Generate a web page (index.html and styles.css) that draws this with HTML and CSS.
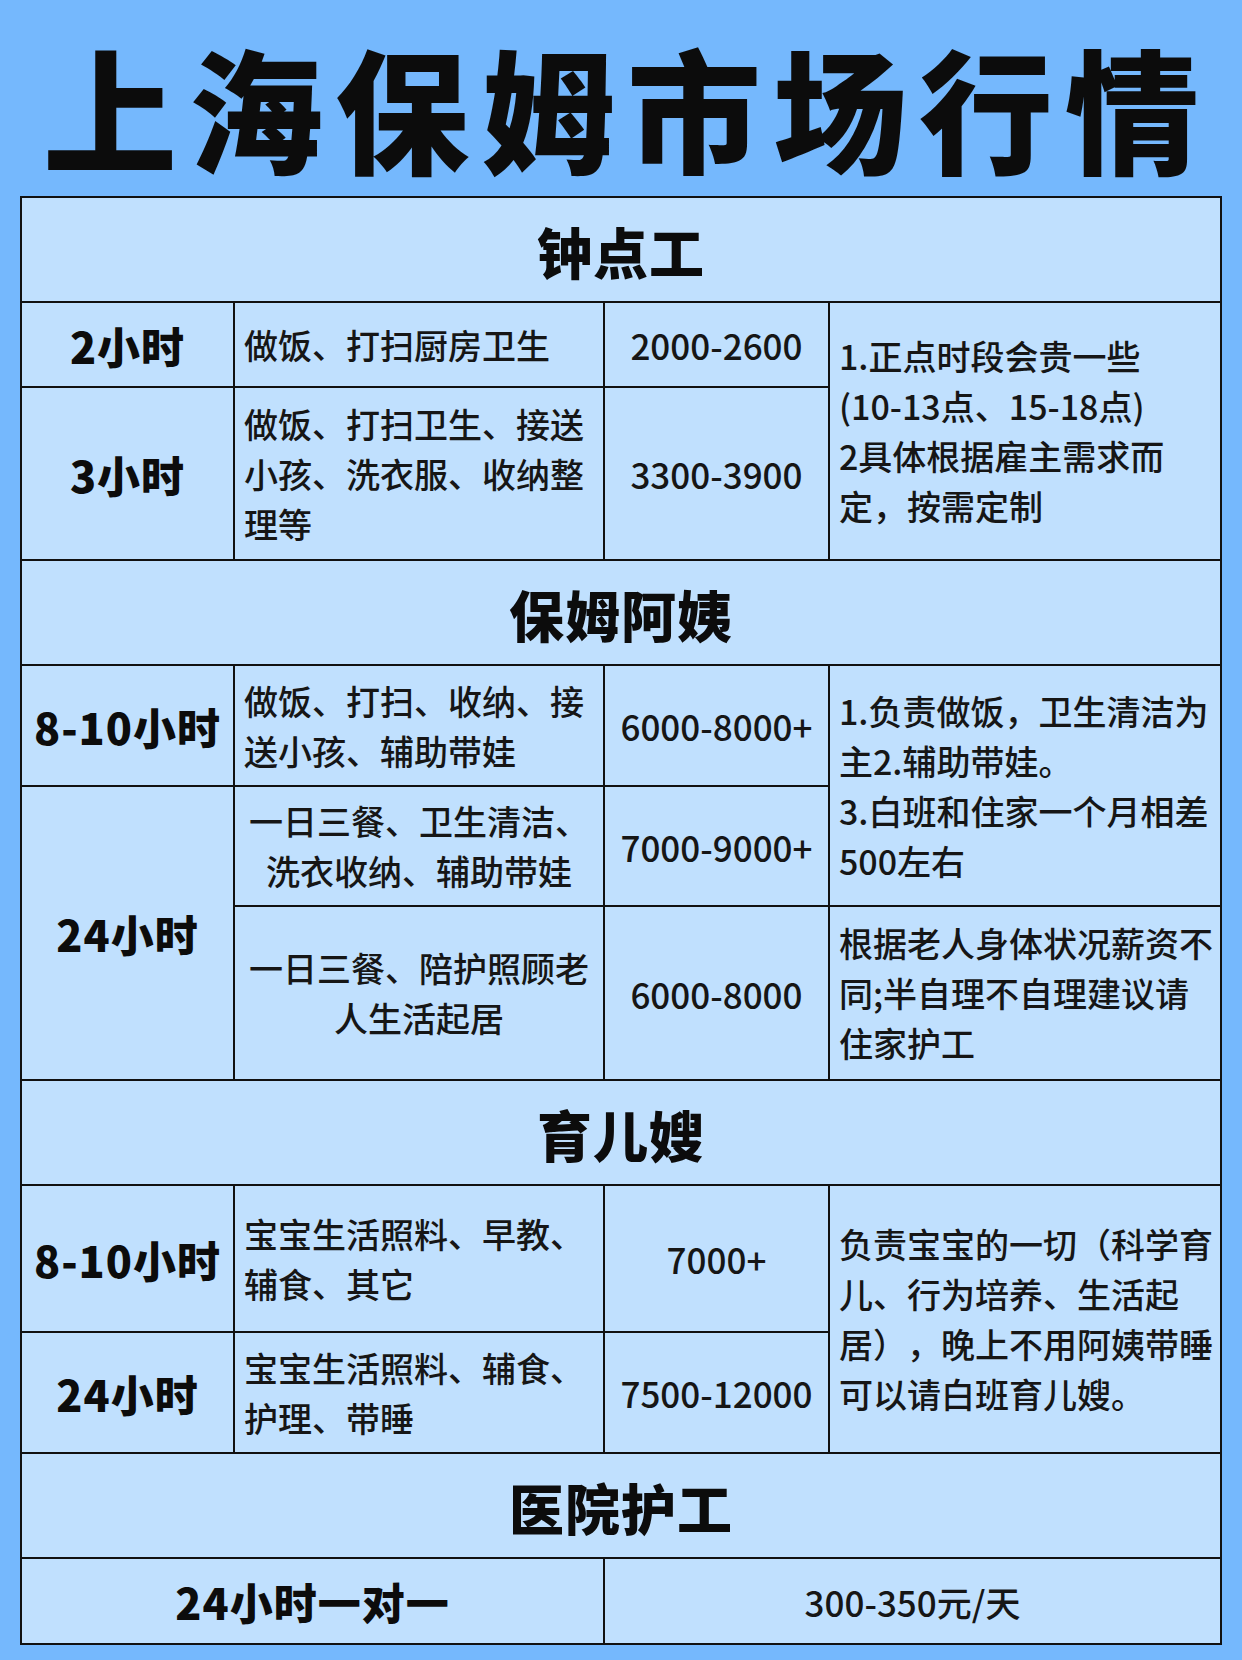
FILE: index.html
```html
<!DOCTYPE html>
<html lang="zh-CN">
<head>
<meta charset="utf-8">
<title>上海保姆市场行情</title>
<link rel="stylesheet" href="styles.css">
</head>
<body>
<div class="page">
  <h1 class="title">上海保姆市场行情</h1>
  <table class="price-table">
    <colgroup>
      <col class="c-label">
      <col class="c-desc">
      <col class="c-price">
      <col class="c-note">
    </colgroup>
    <tbody>
      <tr class="r-head"><th colspan="4" class="section">钟点工</th></tr>
      <tr class="r-85">
        <td class="label">2小时</td>
        <td class="desc">做饭、打扫厨房卫生</td>
        <td class="price">2000-2600</td>
        <td class="note" rowspan="2">1.正点时段会贵一些<br>(10-13点、15-18点)<br>2具体根据雇主需求而<br>定，按需定制</td>
      </tr>
      <tr class="r-173">
        <td class="label">3小时</td>
        <td class="desc">做饭、打扫卫生、接送小孩、洗衣服、收纳整理等</td>
        <td class="price">3300-3900</td>
      </tr>

      <tr class="r-head"><th colspan="4" class="section">保姆阿姨</th></tr>
      <tr class="r-121">
        <td class="label">8-10小时</td>
        <td class="desc">做饭、打扫、收纳、接送小孩、辅助带娃</td>
        <td class="price">6000-8000+</td>
        <td class="note" rowspan="2">1.负责做饭，卫生清洁为<br>主2.辅助带娃。<br>3.白班和住家一个月相差<br>500左右</td>
      </tr>
      <tr class="r-120">
        <td class="label" rowspan="2">24小时</td>
        <td class="desc center">一日三餐、卫生清洁、洗衣收纳、辅助带娃</td>
        <td class="price">7000-9000+</td>
      </tr>
      <tr class="r-174">
        <td class="desc center">一日三餐、陪护照顾老人生活起居</td>
        <td class="price">6000-8000</td>
        <td class="note">根据老人身体状况薪资不<br>同;半自理不自理建议请<br>住家护工</td>
      </tr>

      <tr class="r-head"><th colspan="4" class="section">育儿嫂</th></tr>
      <tr class="r-147">
        <td class="label">8-10小时</td>
        <td class="desc">宝宝生活照料、早教、辅食、其它</td>
        <td class="price">7000+</td>
        <td class="note" rowspan="2">负责宝宝的一切（科学育<br>儿、行为培养、生活起<br>居），晚上不用阿姨带睡<br>可以请白班育儿嫂。</td>
      </tr>
      <tr class="r-121">
        <td class="label">24小时</td>
        <td class="desc">宝宝生活照料、辅食、护理、带睡</td>
        <td class="price">7500-12000</td>
      </tr>

      <tr class="r-head"><th colspan="4" class="section">医院护工</th></tr>
      <tr class="r-86">
        <td class="label" colspan="2">24小时一对一</td>
        <td class="price" colspan="2">300-350元/天</td>
      </tr>
    </tbody>
  </table>
</div>
</body>
</html>
```
FILE: styles.css
```css
html, body {
  margin: 0;
  padding: 0;
}
body {
  background: #75b8fd;
  width: 1242px;
  height: 1660px;
  overflow: hidden;
  font-family: "Noto Sans CJK SC", "Noto Sans", sans-serif;
  color: #161616;
  text-spacing-trim: space-all;
}
.page {
  width: 1242px;
}
.title {
  margin: 0;
  height: 196px;
  box-sizing: border-box;
  padding-top: 16px;
  line-height: 180px;
  text-align: center;
  font-size: 134px;
  font-weight: 900;
  letter-spacing: 12px;
  text-indent: 12px;
  color: #0c0c0c;
  white-space: nowrap;
}
.price-table {
  margin: 0 auto;
  width: 1200px;
  table-layout: fixed;
  border-collapse: collapse;
  background: #c0e0fe;
  border: 2px solid #111;
}
.c-label { width: 213px; }
.c-desc { width: 370px; }
.c-price { width: 225px; }
.c-note { width: 392px; }

.price-table th,
.price-table td {
  border: 2px solid #111;
  padding: 0;
  vertical-align: middle;
}
.r-head { height: 105px; }
.r-85 { height: 85px; }
.r-86 { height: 86px; }
.r-120 { height: 120px; }
.r-121 { height: 121px; }
.r-147 { height: 147px; }
.r-173 { height: 173px; }
.r-174 { height: 174px; }

.section {
  font-size: 55px;
  font-weight: 900;
  letter-spacing: 1px;
  text-align: center;
  color: #0c0c0c;
}
.label {
  font-size: 43px;
  font-weight: 900;
  letter-spacing: 1px;
  text-align: center;
  color: #0c0c0c;
  white-space: nowrap;
}
.desc {
  font-size: 34px;
  font-weight: 500;
  line-height: 50px;
  padding: 0 9px !important;
  text-align: left;
}
.desc.center {
  text-align: center;
}
.price {
  font-size: 35px;
  font-weight: 500;
  text-align: center;
  white-space: nowrap;
}
.note {
  font-size: 34px;
  font-weight: 500;
  line-height: 50px;
  padding: 0 2px 0 9px !important;
  text-align: left;
  white-space: nowrap;
}
```
